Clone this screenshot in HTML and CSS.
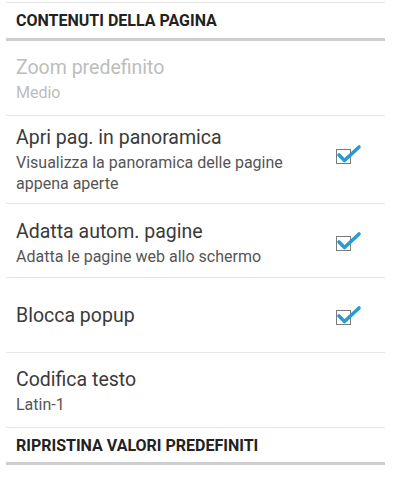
FILE: index.html
```html
<!DOCTYPE html>
<html lang="it">
<head>
<meta charset="utf-8">
<link rel="stylesheet" href="styles.css">
</head>
<body>
<div class="list">
  <div class="topline"></div>
  <div class="header first">CONTENUTI DELLA PAGINA</div>

  <div class="row zoom disabled">
    <div class="text">
      <div class="title">Zoom predefinito</div>
      <div class="sub">Medio</div>
    </div>
  </div>

  <div class="row apri">
    <div class="text">
      <div class="title">Apri pag. in panoramica</div>
      <div class="sub">Visualizza la panoramica delle pagine<br>appena aperte</div>
    </div>
    <div class="check up"><svg viewBox="0 0 26 22" width="26" height="22"><path d="M2 11 L7.5 16.5 L22 3" /></svg></div>
  </div>

  <div class="row adatta">
    <div class="text">
      <div class="title">Adatta autom. pagine</div>
      <div class="sub">Adatta le pagine web allo schermo</div>
    </div>
    <div class="check"><svg viewBox="0 0 26 22" width="26" height="22"><path d="M2 11 L7.5 16.5 L22 3" /></svg></div>
  </div>

  <div class="row blocca">
    <div class="text">
      <div class="title">Blocca popup</div>
    </div>
    <div class="check"><svg viewBox="0 0 26 22" width="26" height="22"><path d="M2 11 L7.5 16.5 L22 3" /></svg></div>
  </div>

  <div class="row codifica">
    <div class="text">
      <div class="title">Codifica testo</div>
      <div class="sub">Latin-1</div>
    </div>
  </div>

  <div class="header last">RIPRISTINA VALORI PREDEFINITI</div>
</div>
</body>
</html>
```
FILE: styles.css
```css
html, body {
  margin: 0;
  padding: 0;
  background: #ffffff;
}
body {
  font-family: Roboto, "Noto Sans", "Liberation Sans", sans-serif;
  color: #3a3a3a;
  width: 403px;
  height: 480px;
  overflow: hidden;
}
.list {
  margin: 0 18px 0 6px;
}
.topline {
  margin-top: 2px;
  border-top: 1px solid #e6e6e6;
}
.header {
  font-weight: bold;
  font-size: 16px;
  line-height: 20px;
  color: #222222;
  padding-left: 10px;
  border-bottom: 3px solid #cfcfcf;
}
.header.first {
  padding-top: 8px;
  padding-bottom: 7px;
}
.header.last {
  padding-top: 8px;
  padding-bottom: 6px;
}
.row {
  display: flex;
  align-items: center;
  padding-left: 10px;
  border-bottom: 1px solid #e6e6e6;
}
.text {
  flex: 1;
}
.title {
  font-size: 19.5px;
  line-height: 24px;
  color: #3a3a3a;
}
.sub {
  font-size: 16px;
  line-height: 21px;
  margin-top: 2px;
  color: #555555;
}
.disabled .title,
.disabled .sub {
  color: #bdbdbd;
}
.zoom { padding-top: 15px; padding-bottom: 12px; }
.apri { padding-top: 10px; padding-bottom: 9px; }
.adatta { padding-top: 16px; padding-bottom: 10px; }
.blocca { padding-top: 26px; padding-bottom: 24px; }
.codifica { padding-top: 15px; padding-bottom: 12px; }

.check {
  position: relative;
  width: 13px;
  height: 13px;
  border: 1px solid #7a7a7a;
  margin-right: 34px;
  flex: none;
}
.check.up {
  margin-bottom: 8px;
}
.blocca .check {
  margin-top: 2px;
}
.check svg {
  position: absolute;
  left: 0;
  top: -6px;
  overflow: visible;
}
.check path {
  fill: none;
  stroke: #2a9bd0;
  stroke-width: 3.6;
  stroke-linecap: round;
  stroke-linejoin: round;
}
```
